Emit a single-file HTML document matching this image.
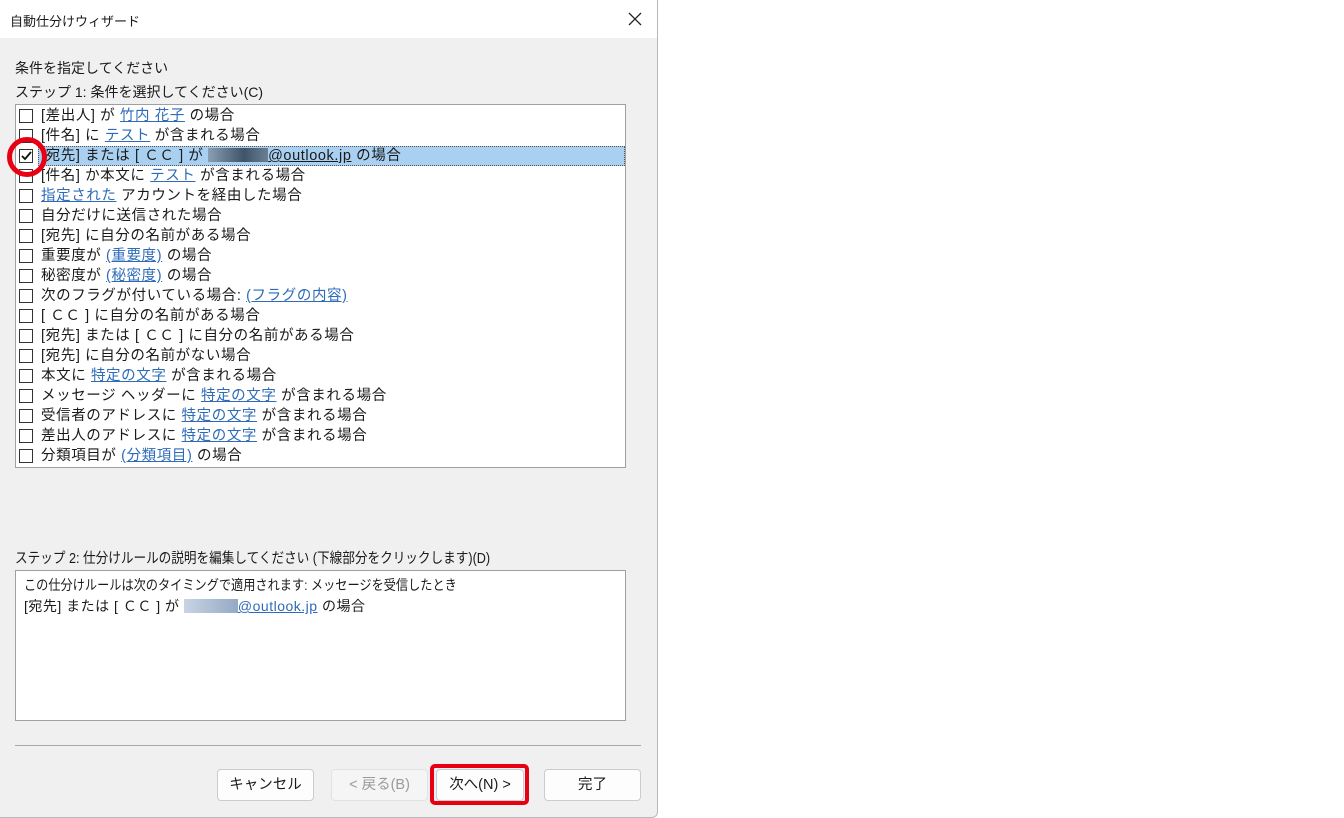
<!DOCTYPE html>
<html><head><meta charset="utf-8"><style>
*{margin:0;padding:0;box-sizing:border-box}
body{width:1344px;height:818px;background:#fff;font-family:"Liberation Sans","Noto Sans CJK JP",sans-serif;font-size:14px;color:#1a1a1a;position:relative;overflow:hidden}
.dlg{position:absolute;left:0;top:0;width:658px;height:818px;background:#f0f0f0;border-right:1px solid #b8b8b8;border-bottom:1px solid #b8b8b8;border-radius:0 0 6px 0}
.title{position:absolute;left:0;top:0;width:657px;height:38px;background:#fff}
.abs{position:absolute;white-space:nowrap}
.list{position:absolute;left:15px;top:104px;width:611px;height:364px;background:#fff;border:1px solid #a0a0a0;font-size:14.5px;letter-spacing:0.6px}
.row{position:absolute;left:0;height:20px;width:609px;line-height:20px}
.cb{position:absolute;left:3px;top:3px;width:14px;height:14px;border:1px solid #333;background:#fff}
.tx{position:absolute;left:25px;top:0;white-space:nowrap}
a{color:#2e6bb8;text-decoration:underline}
.hl{background:#a9d0f1;border:1px dotted #555;left:22px;width:587px}
.desc{position:absolute;left:15px;top:570px;width:611px;height:151px;background:#fff;border:1px solid #a0a0a0}
.btn{position:absolute;top:769px;height:32px;width:97px;background:#fdfdfd;border:1px solid #ccc;border-radius:4px;text-align:center;line-height:30px;font-size:14.5px}
.blur{display:inline-block;width:60px;height:14px;vertical-align:-2px;background:linear-gradient(90deg,#8a9fb3,#3e5468 60%,#6b8093)}
.sq{transform-origin:0 0;transform:scaleX(0.87)}
</style></head><body>
<div class="dlg">
<div class="title"></div>
<div class="abs" style="left:10px;top:11px;font-size:13px">自動仕分けウィザード</div>
<svg class="abs" style="left:628px;top:12px" width="14" height="14"><path d="M1 1L13 13M13 1L1 13" stroke="#222" stroke-width="1.3"/></svg>
<div class="abs" style="left:15px;top:58px">条件を指定してください</div>
<div class="abs" style="left:15px;top:82px">ステップ 1: 条件を選択してください(C)</div>
<div class="list">
<div class="row" style="top:1px"><div class="cb"></div><div class="tx">[差出人] が <a>竹内 花子</a> の場合</div></div>
<div class="row" style="top:21px"><div class="cb"></div><div class="tx">[件名] に <a>テスト</a> が含まれる場合</div></div>
<div class="row hl" style="top:41px"></div>
<div class="row" style="top:41px"><div class="cb"><svg width="12" height="12" style="position:absolute;left:0;top:0"><path d="M2 6L5 9L11 2" stroke="#111" stroke-width="1.8" fill="none"/></svg></div><div class="tx">[宛先] または [ ＣＣ ] が <span class="blur"></span><a style="color:#1a1a1a">@outlook.jp</a> の場合</div></div>
<div class="row" style="top:61px"><div class="cb"></div><div class="tx">[件名] か本文に <a>テスト</a> が含まれる場合</div></div>
<div class="row" style="top:81px"><div class="cb"></div><div class="tx"><a>指定された</a> アカウントを経由した場合</div></div>
<div class="row" style="top:101px"><div class="cb"></div><div class="tx">自分だけに送信された場合</div></div>
<div class="row" style="top:121px"><div class="cb"></div><div class="tx">[宛先] に自分の名前がある場合</div></div>
<div class="row" style="top:141px"><div class="cb"></div><div class="tx">重要度が <a>(重要度)</a> の場合</div></div>
<div class="row" style="top:161px"><div class="cb"></div><div class="tx">秘密度が <a>(秘密度)</a> の場合</div></div>
<div class="row" style="top:181px"><div class="cb"></div><div class="tx">次のフラグが付いている場合: <a>(フラグの内容)</a></div></div>
<div class="row" style="top:201px"><div class="cb"></div><div class="tx">[ ＣＣ ] に自分の名前がある場合</div></div>
<div class="row" style="top:221px"><div class="cb"></div><div class="tx">[宛先] または [ ＣＣ ] に自分の名前がある場合</div></div>
<div class="row" style="top:241px"><div class="cb"></div><div class="tx">[宛先] に自分の名前がない場合</div></div>
<div class="row" style="top:261px"><div class="cb"></div><div class="tx">本文に <a>特定の文字</a> が含まれる場合</div></div>
<div class="row" style="top:281px"><div class="cb"></div><div class="tx">メッセージ ヘッダーに <a>特定の文字</a> が含まれる場合</div></div>
<div class="row" style="top:301px"><div class="cb"></div><div class="tx">受信者のアドレスに <a>特定の文字</a> が含まれる場合</div></div>
<div class="row" style="top:321px"><div class="cb"></div><div class="tx">差出人のアドレスに <a>特定の文字</a> が含まれる場合</div></div>
<div class="row" style="top:341px"><div class="cb"></div><div class="tx">分類項目が <a>(分類項目)</a> の場合</div></div>
</div>
<svg class="abs" style="left:5px;top:135px" width="46" height="46"><circle cx="22" cy="22" r="17.5" stroke="#e60012" stroke-width="5" fill="none"/></svg>
<div class="abs sq" style="left:15px;top:547px;font-size:14.5px">ステップ 2: 仕分けルールの説明を編集してください (下線部分をクリックします)(D)</div>
<div class="desc">
<div class="abs sq" style="left:8px;top:4px">この仕分けルールは次のタイミングで適用されます: メッセージを受信したとき</div>
<div class="abs" style="left:8px;top:25px;letter-spacing:0.5px">[宛先] または [ ＣＣ ] が <span class="blur" style="width:54px;background:linear-gradient(90deg,#c8d4e4,#94a9c4)"></span><a>@outlook.jp</a> の場合</div>
</div>
<div class="abs" style="left:15px;top:745px;width:626px;height:1px;background:#a8a8a8"></div>
<div class="btn" style="left:217px">キャンセル</div>
<div class="btn" style="left:331px;color:#9a9a9a;background:#f5f5f5;border-color:#e2e2e2">&lt; 戻る(B)</div>
<div class="btn" style="left:436px;width:88px">次へ(N) &gt;</div>
<div class="abs" style="left:430px;top:764px;width:99px;height:41px;border:4px solid #e60012;border-radius:5px"></div>
<div class="btn" style="left:544px">完了</div>
</div>
</body></html>
